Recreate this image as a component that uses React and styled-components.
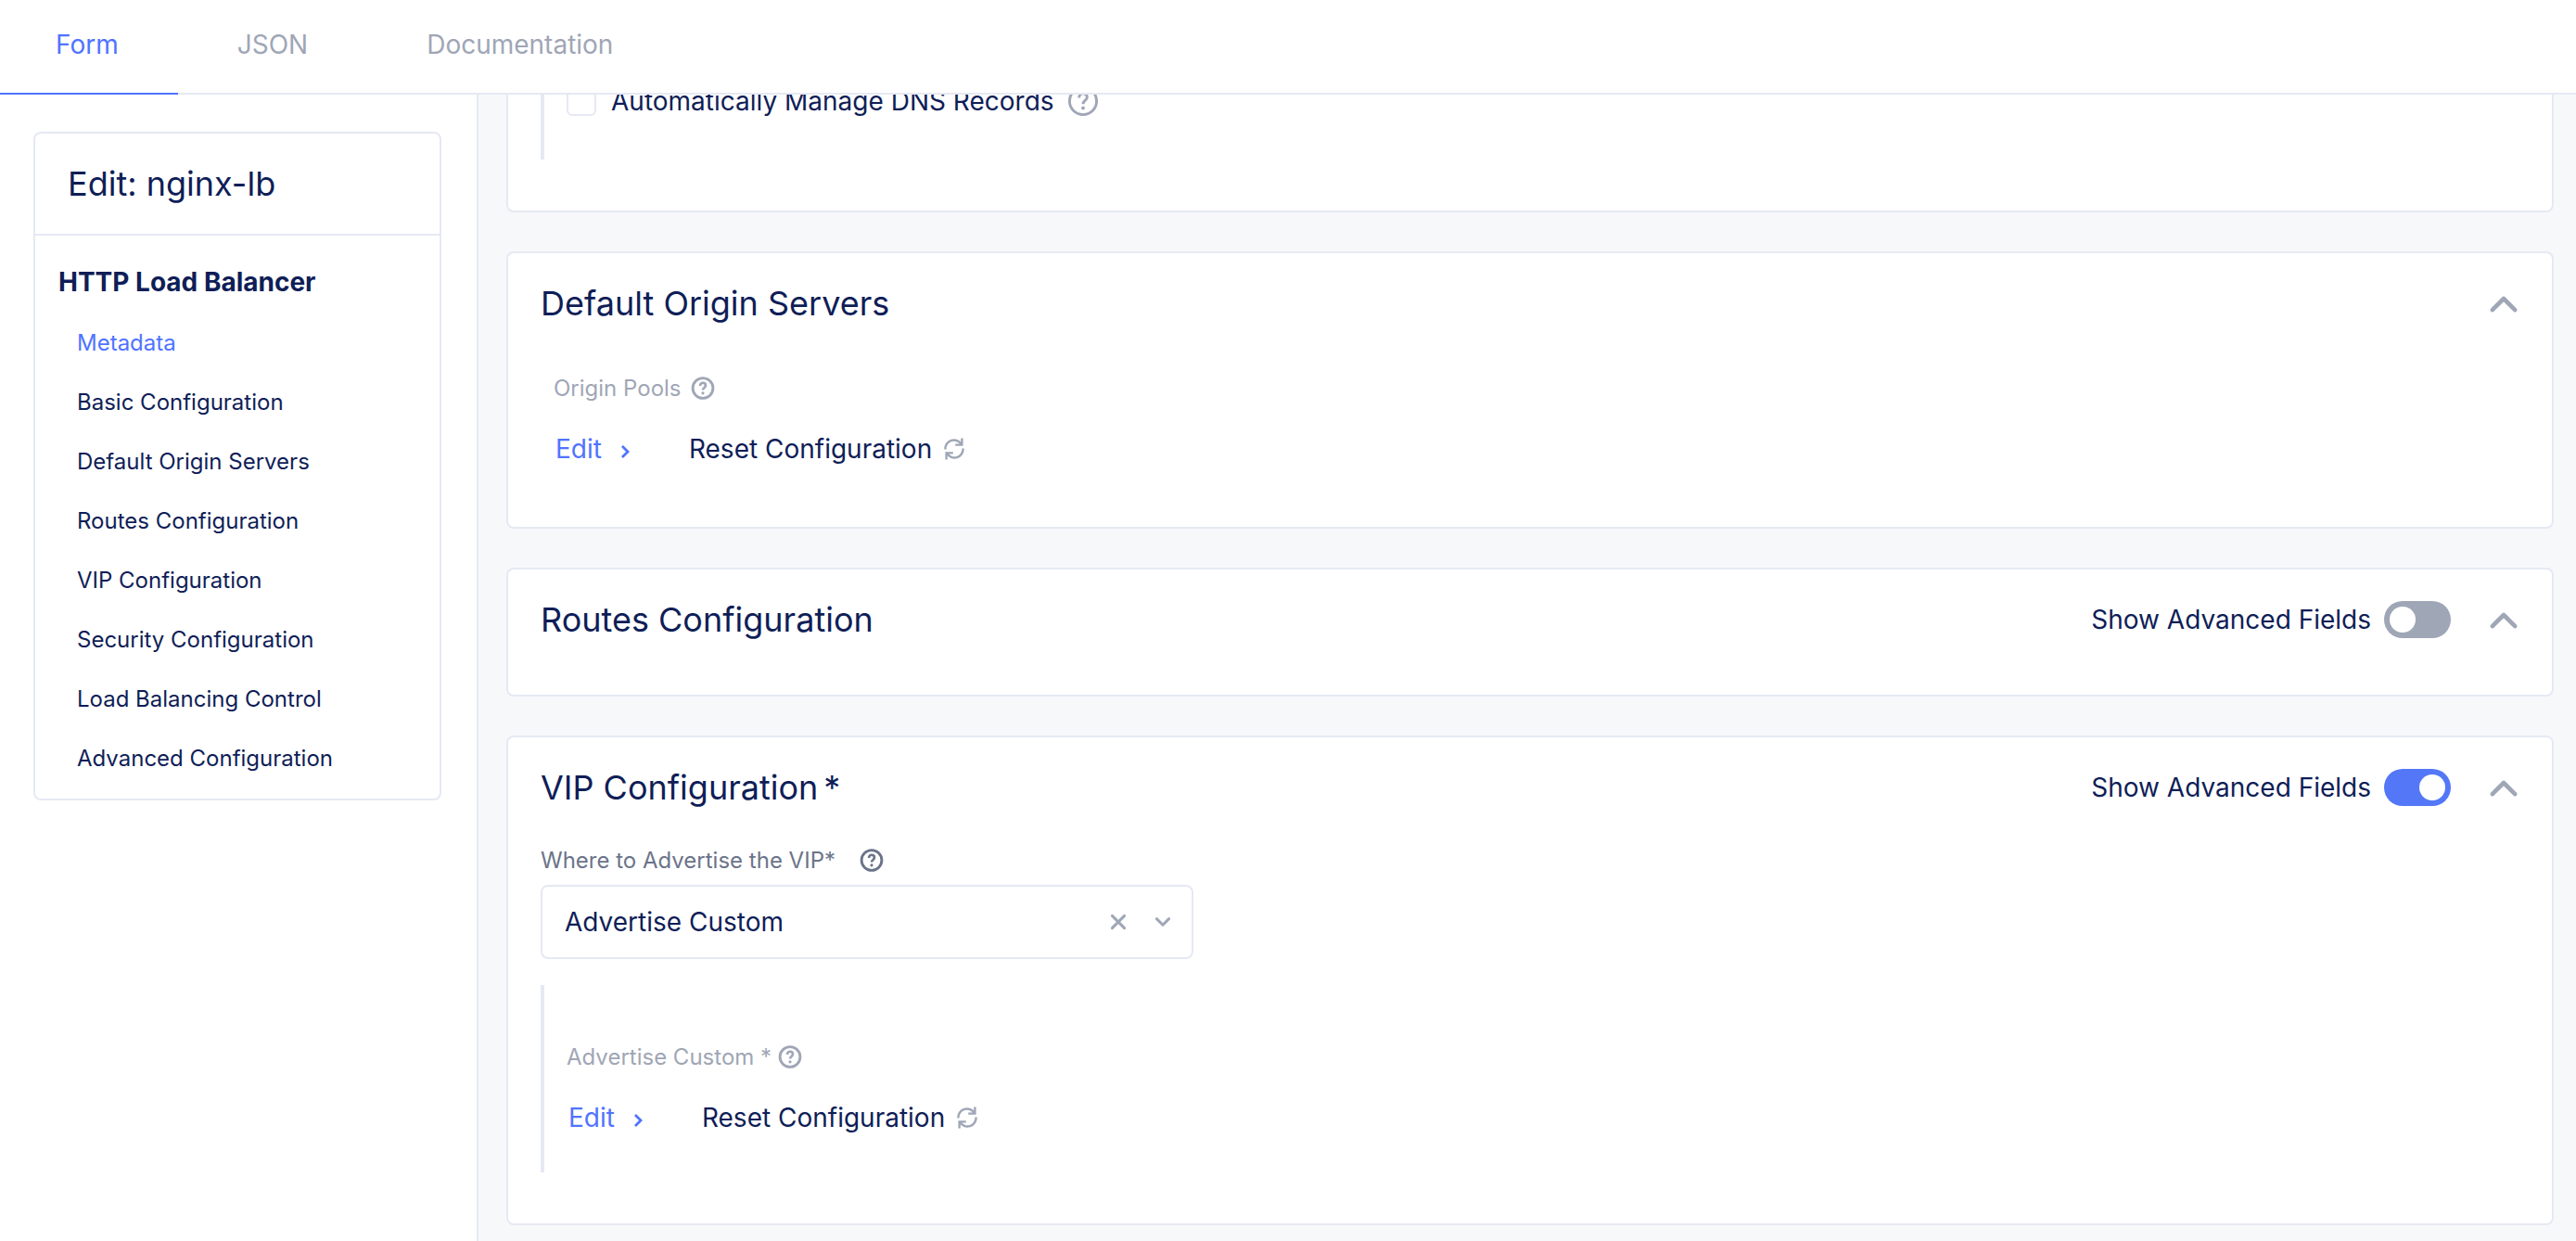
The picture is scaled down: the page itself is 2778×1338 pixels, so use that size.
import React, { useState } from "react";
import styled, { createGlobalStyle } from "styled-components";

const color = {
  navy: "#0f1e57",
  blue: "#4f73ff",
  toggle: "#5377f7",
  grey: "#9fa6b6",
  slate: "#6b7489",
  line: "#e6e9f3",
  canvas: "#f7f8fa",
};

const GlobalStyle = createGlobalStyle`
  *, *::before, *::after { box-sizing: border-box; }
  body {
    margin: 0;
    background: #fff;
    color: ${color.navy};
    font-family: Inter, "Liberation Sans", sans-serif;
    font-size: 28px;
    line-height: 36px;
  }
  button, select, input { font: inherit; color: inherit; }
`;

const Page = styled.div`
  display: flex;
  flex-direction: column;
  height: 100vh;
  overflow: hidden;
`;

const Tabs = styled.nav`
  display: flex;
  flex: none;
  border-bottom: 2px solid ${color.line};
`;

const Tab = styled.button`
  padding: 30px 64px 34px;
  margin-bottom: -2px;
  border: 0;
  border-bottom: 2px solid ${(p) => (p.$active ? color.blue : "transparent")};
  background: none;
  color: ${(p) => (p.$active ? color.blue : color.grey)};
  cursor: pointer;
  &:first-child {
    padding-left: 60px;
  }
`;

const Body = styled.div`
  display: flex;
  flex: 1;
  min-height: 0;
`;

const Sidebar = styled.aside`
  flex: none;
  width: 516px;
  padding: 40px 38px 40px 36px;
  border-right: 2px solid ${color.line};
`;

const Panel = styled.div`
  border: 2px solid ${color.line};
  border-radius: 8px;
  background: #fff;
`;

const PanelTitle = styled.h1`
  margin: 0;
  padding: 32px 35px;
  border-bottom: 2px solid ${color.line};
  font-size: 36px;
  font-weight: 400;
  line-height: 44px;
`;

const NavGroup = styled.h2`
  margin: 0;
  padding: 32px 25px 16px;
  font-size: 28px;
  font-weight: 700;
  line-height: 36px;
`;

const NavList = styled.ul`
  margin: 0;
  padding: 0 0 11px;
  list-style: none;
`;

const NavLink = styled.a`
  display: block;
  padding: 16px 45px;
  color: ${(p) => (p.$active ? color.blue : color.navy)};
  font-size: 24px;
  line-height: 32px;
  text-decoration: none;
`;

const Main = styled.main`
  display: flex;
  flex: 1;
  flex-direction: column;
  justify-content: flex-end;
  gap: 42px;
  min-width: 0;
  padding: 0 24px 17px 30px;
  overflow: hidden;
  background: ${color.canvas};
`;

const Card = styled.section`
  flex: none;
  padding: 28px 35px 55px;
  border: 2px solid ${color.line};
  border-radius: 8px;
  background: #fff;
`;

const CardHead = styled.header`
  display: flex;
  align-items: center;
  gap: 40px;
`;

const CardTitle = styled.h2`
  flex: 1;
  margin: 0;
  font-size: 36px;
  font-weight: 400;
  line-height: 52px;
`;

const Required = styled.span`
  margin-left: 6px;
`;

const SwitchLabel = styled.label`
  display: flex;
  align-items: center;
  gap: 14px;
  cursor: pointer;
`;

const Switch = styled.input`
  appearance: none;
  display: flex;
  width: 72px;
  height: 40px;
  margin: 0;
  padding: 6px;
  border-radius: 20px;
  background: ${color.grey};
  cursor: pointer;
  &::before {
    content: "";
    width: 28px;
    height: 28px;
    border-radius: 50%;
    background: #fff;
  }
  &:checked {
    justify-content: flex-end;
    background: ${color.toggle};
  }
`;

const IconButton = styled.button`
  display: inline-flex;
  align-items: center;
  justify-content: center;
  padding: 0;
  border: 0;
  background: none;
  color: ${(p) => p.$color || color.grey};
  cursor: pointer;
`;

const Group = styled.div`
  margin-top: ${(p) => (p.$inset ? "50px" : "37px")};
  padding: ${(p) => (p.$inset ? "0 14px 11px" : "0")};
`;

const Rail = styled.div`
  margin-top: ${(p) => (p.$spaced ? "28px" : "0")};
  padding: ${(p) => (p.$spaced ? "62px 24px 41px" : "0 24px 45px")};
  border-left: 4px solid ${color.line};
`;

const FieldLabel = styled.div`
  display: flex;
  align-items: center;
  gap: ${(p) => p.$gap}px;
  color: ${(p) => (p.$strong ? color.slate : color.grey)};
  font-size: 24px;
  line-height: 32px;
`;

const Actions = styled.div`
  display: flex;
  align-items: center;
  gap: 64px;
  margin-top: 31px;
  padding-left: 2px;
`;

const EditLink = styled.a`
  display: inline-flex;
  align-items: center;
  gap: 20px;
  color: ${color.blue};
  text-decoration: none;
  svg { margin-top: 6px; }
`;

const ResetButton = styled.button`
  display: inline-flex;
  align-items: center;
  gap: 12px;
  padding: 0;
  border: 0;
  background: none;
  cursor: pointer;
  svg { color: ${color.grey}; }
`;

const CheckRow = styled.div`
  display: flex;
  align-items: center;
  gap: 14px;
`;

const CheckLabel = styled.label`
  display: flex;
  align-items: center;
  gap: 16px;
`;

const Checkbox = styled.input`
  appearance: none;
  width: 32px;
  height: 32px;
  margin: 0;
  border: 2px solid ${color.line};
  border-radius: 6px;
  background: #fff;
`;

const SelectBox = styled.div`
  display: flex;
  align-items: center;
  width: 704px;
  height: 80px;
  margin-top: 10px;
  padding-right: 22px;
  border: 2px solid ${color.line};
  border-radius: 8px;
  color: ${color.grey};
`;

const Select = styled.select`
  flex: 1;
  align-self: stretch;
  padding: 0 24px;
  appearance: none;
  border: 0;
  background: none;
  color: ${color.navy};
`;

const SelectIcons = styled.div`
  display: flex;
  align-items: center;
  gap: 29px;
`;

const HelpIcon = () => (
  <svg width="26" height="26" viewBox="0 0 26 26" fill="none" stroke="currentColor" aria-hidden="true">
    <circle cx="13" cy="12.5" r="10.9" strokeWidth="2.9" />
    <path d="M10 10c0-2 1.3-3.2 3-3.2s3 1.1 3 2.8c0 2.200-3 2.500-3 4.900" strokeWidth="2.6" />
    <circle cx="13" cy="17.8" r="1.6" fill="currentColor" stroke="none" />
  </svg>
);

const LargeHelpIcon = () => (
  <svg width="34" height="34" viewBox="0 0 34 34" fill="none" stroke="currentColor" aria-hidden="true">
    <circle cx="17" cy="17" r="14.6" strokeWidth="2.9" />
    <path d="M12.7 13.5c0-2.9 1.9-4.6 4.3-4.6s4.3 1.6 4.3 4c0 3.2-4.3 3.400-4.3 7.400" strokeWidth="2.9" />
    <circle cx="17" cy="24.5" r="1.9" fill="currentColor" stroke="none" />
  </svg>
);

const Help = ({ large, tint }) => (
  <IconButton type="button" aria-label="Help" $color={tint}>
    {large ? <LargeHelpIcon /> : <HelpIcon />}
  </IconButton>
);

const ChevronUp = () => (
  <svg width="34" height="24" viewBox="0 0 34 24" fill="none" stroke="currentColor" strokeWidth="4.6" strokeLinecap="round" strokeLinejoin="round" aria-hidden="true">
    <path d="M4.8 19.200 17 7l12.200 12.200" />
  </svg>
);

const ChevronRight = () => (
  <svg width="10" height="16" viewBox="0 0 10 16" fill="none" stroke="currentColor" strokeWidth="2.8" aria-hidden="true">
    <path d="m2 2 6 6-6 6" />
  </svg>
);

const ChevronDown = () => (
  <svg width="18" height="12" viewBox="0 0 18 12" fill="none" stroke="currentColor" strokeWidth="3" strokeLinecap="round" strokeLinejoin="round" aria-hidden="true">
    <path d="m2.4 2.6 6.6 6.6 6.600-6.600" />
  </svg>
);

const CloseIcon = () => (
  <svg width="20" height="20" viewBox="0 0 20 20" fill="none" stroke="currentColor" strokeWidth="3" strokeLinecap="round" aria-hidden="true">
    <path d="m3.4 3.4 13.2 13.2M16.6 3.4 3.4 16.6" />
  </svg>
);

const RefreshIcon = () => (
  <svg width="24" height="24" viewBox="0 0 24 24" fill="none" stroke="currentColor" strokeWidth="2.4" aria-hidden="true">
    <path d="M2.4 12.5A9.3 9.3 0 0 1 19.8 7.3M21.6 11.5A9.3 9.3 0 0 1 4.2 16.7" />
    <path d="M20.4 .5V7.6H13.2M3.6 23.5V16.4H10.8" />
  </svg>
);

const tabs = ["Form", "JSON", "Documentation"];
const sections = [
  "Metadata",
  "Basic Configuration",
  "Default Origin Servers",
  "Routes Configuration",
  "VIP Configuration",
  "Security Configuration",
  "Load Balancing Control",
  "Advanced Configuration",
];

function EditReset() {
  return (
    <Actions>
      <EditLink href="#edit">
        Edit <ChevronRight />
      </EditLink>
      <ResetButton type="button">
        Reset Configuration <RefreshIcon />
      </ResetButton>
    </Actions>
  );
}

function Section({ title, required, advanced, children }) {
  const [on, setOn] = useState(advanced === "on");
  return (
    <Card>
      <CardHead>
        <CardTitle>
          {title}
          {required && <Required>*</Required>}
        </CardTitle>
        {advanced && (
          <SwitchLabel>
            Show Advanced Fields
            <Switch type="checkbox" role="switch" checked={on} onChange={(e) => setOn(e.target.checked)} />
          </SwitchLabel>
        )}
        <IconButton type="button" aria-label={`Collapse ${title}`}>
          <ChevronUp />
        </IconButton>
      </CardHead>
      {children}
    </Card>
  );
}

export default function App() {
  const [tab, setTab] = useState("Form");
  return (
    <Page>
      <GlobalStyle />
      <Tabs>
        {tabs.map((name) => (
          <Tab key={name} type="button" $active={name === tab} onClick={() => setTab(name)}>
            {name}
          </Tab>
        ))}
      </Tabs>
      <Body>
        <Sidebar>
          <Panel>
            <PanelTitle>Edit: nginx-lb</PanelTitle>
            <NavGroup>HTTP Load Balancer</NavGroup>
            <NavList>
              {sections.map((name, i) => (
                <li key={name}>
                  <NavLink href={`#section-${i}`} $active={i === 0}>
                    {name}
                  </NavLink>
                </li>
              ))}
            </NavList>
          </Panel>
        </Sidebar>
        <Main>
          <Card>
            <Rail>
              <CheckRow>
                <CheckLabel>
                  <Checkbox type="checkbox" />
                  Automatically Manage DNS Records
                </CheckLabel>
                <Help large />
              </CheckRow>
            </Rail>
          </Card>
          <Section title="Default Origin Servers">
            <Group $inset>
              <FieldLabel $gap={10}>
                Origin Pools <Help />
              </FieldLabel>
              <EditReset />
            </Group>
          </Section>
          <Section title="Routes Configuration" advanced="off" />
          <Section title="VIP Configuration" required advanced="on">
            <Group>
              <FieldLabel $gap={26} $strong>
                <label htmlFor="advertise">Where to Advertise the VIP*</label>
                <Help tint={color.slate} />
              </FieldLabel>
              <SelectBox>
                <Select id="advertise" defaultValue="Advertise Custom">
                  <option>Advertise Custom</option>
                </Select>
                <SelectIcons>
                  <IconButton type="button" aria-label="Clear">
                    <CloseIcon />
                  </IconButton>
                  <ChevronDown />
                </SelectIcons>
              </SelectBox>
              <Rail $spaced>
                <FieldLabel $gap={7}>
                  Advertise Custom * <Help />
                </FieldLabel>
                <EditReset />
              </Rail>
            </Group>
          </Section>
        </Main>
      </Body>
    </Page>
  );
}
